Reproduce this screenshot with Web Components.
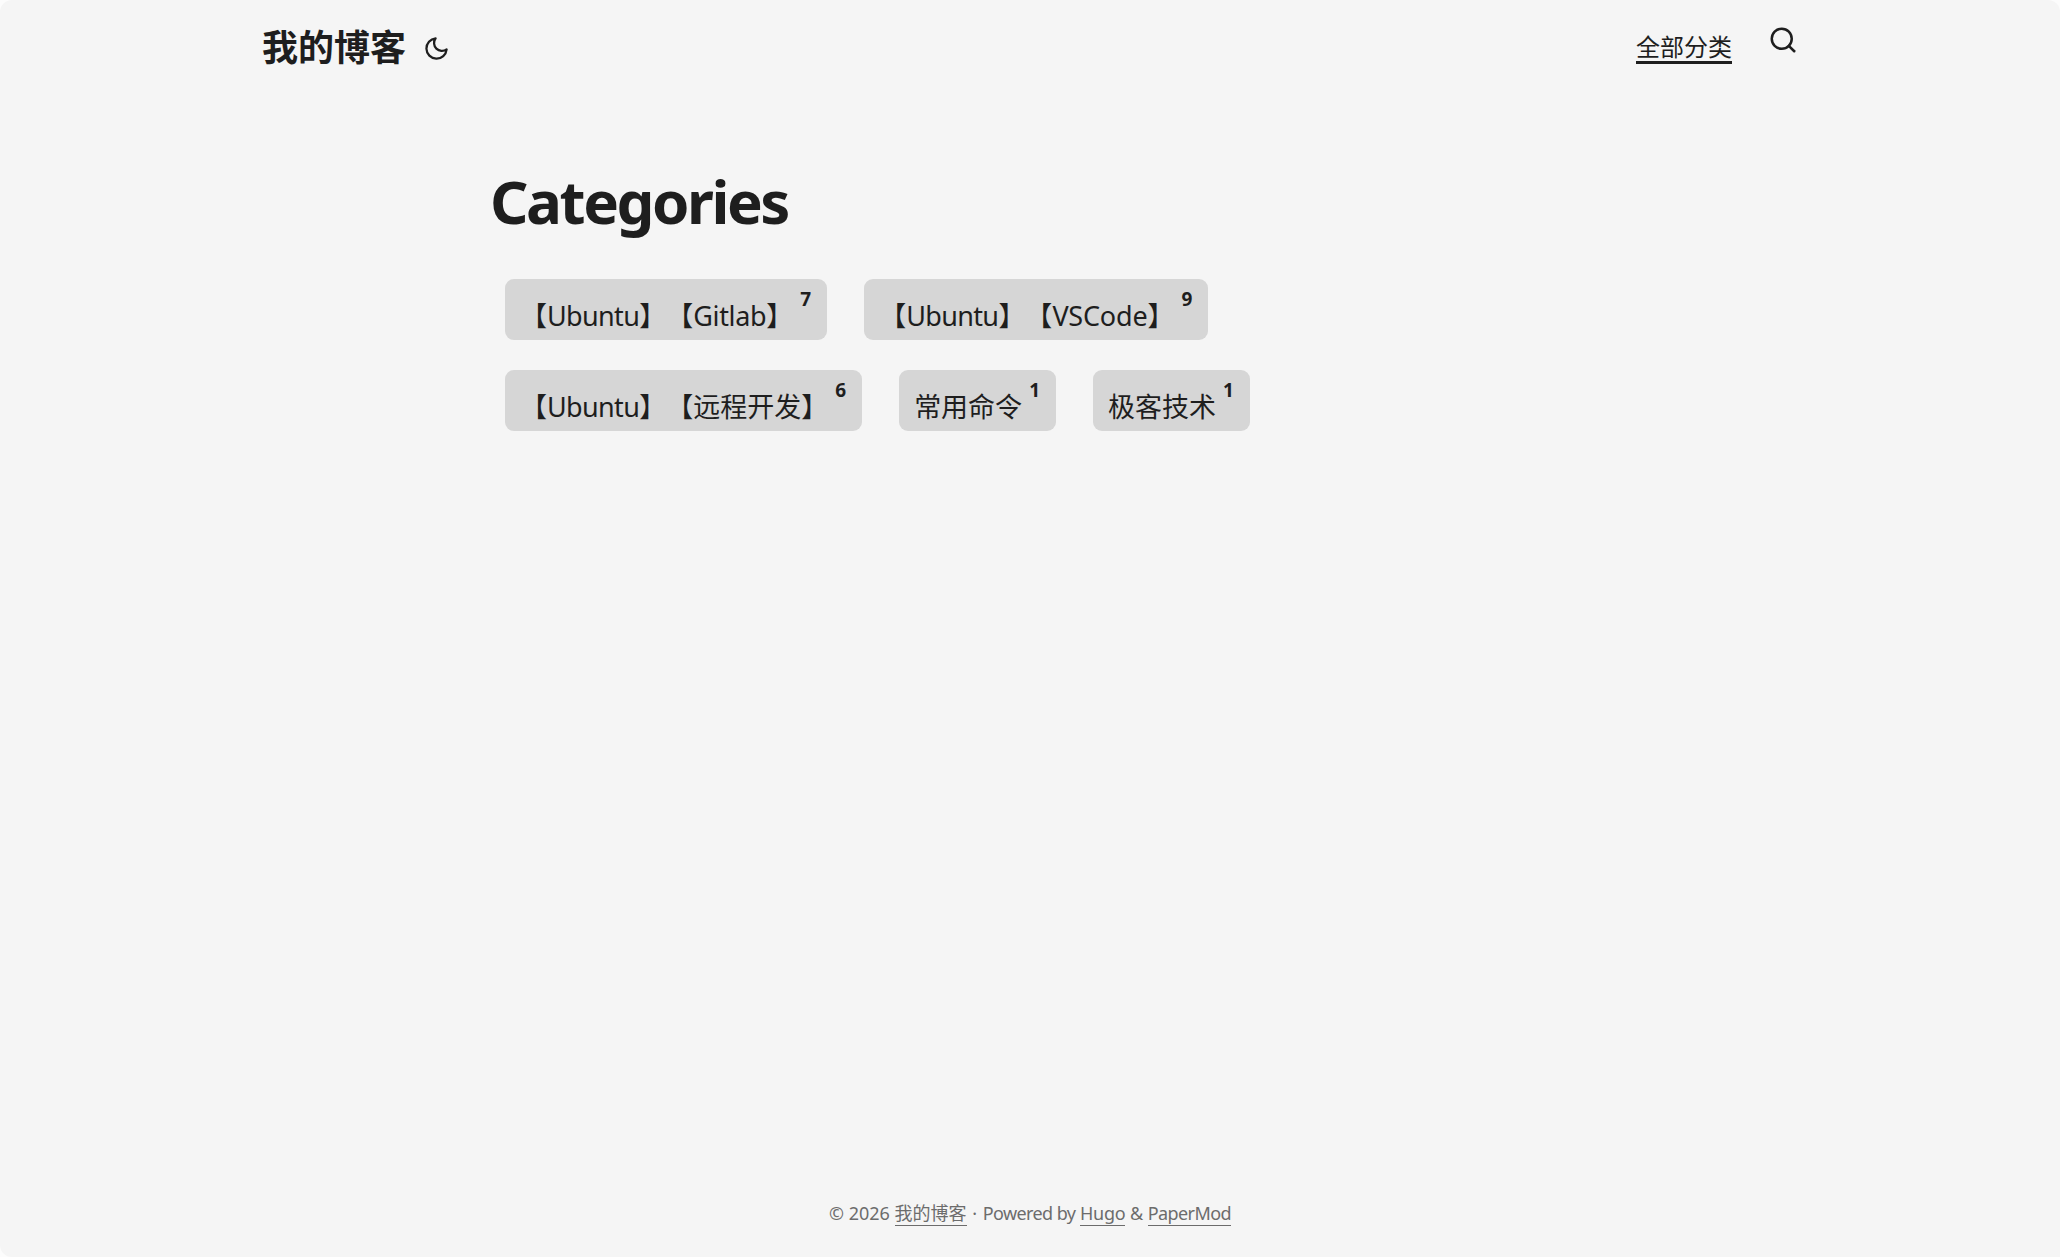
<!doctype html>
<html><head><meta charset="utf-8"><title>Categories</title>
<style>
html,body{margin:0;padding:0;height:100%}
html{background:#fcfcfc}
body{color:#1e1e1e;font-family:"Noto Sans","Noto Sans CJK SC",sans-serif;font-size:27px;line-height:1.6}
.u{letter-spacing:-.65px}.g{letter-spacing:-.35px}.v{letter-spacing:-.2px}
</style></head><body>
<blog-page>
  <blog-header slot="header"></blog-header>
  <blog-main title-text="Categories">
    <term-tag count="7">【<span class="u">Ubuntu</span>】【<span class="g">Gitlab</span>】</term-tag>
    <term-tag count="9">【<span class="u">Ubuntu</span>】【<span class="v">VSCode</span>】</term-tag>
    <term-tag count="6">【<span class="u">Ubuntu</span>】【远程开发】</term-tag>
    <term-tag count="1">常用命令</term-tag>
    <term-tag count="1">极客技术</term-tag>
  </blog-main>
  <blog-footer slot="footer"></blog-footer>
</blog-page>
<script>
const def=(name,html,init)=>customElements.define(name,class extends HTMLElement{
  constructor(){super();this.attachShadow({mode:"open"}).innerHTML=html;}
  connectedCallback(){init&&init(this)}
});
def("blog-page",`<style>
:host{display:flex;flex-direction:column;height:1257px;overflow:hidden;background:#f5f5f5;border-radius:12px 12px 0 12px}
.m{flex:1}
</style><slot name="header"></slot><div class="m"><slot></slot></div><slot name="footer"></slot>`);
def("blog-header",`<style>
:host{display:block}
nav{box-sizing:border-box;width:1536px;margin:0 auto;display:flex;justify-content:space-between;height:96px}
.l{display:flex;align-items:center;height:96px}
.logo{font-size:36px;font-weight:700;font-family:"Noto Sans CJK SC","Noto Sans",sans-serif;line-height:90px;height:96px;color:#1e1e1e}
.moon{display:block;margin-left:17px}
.r{display:flex;align-items:flex-start}
a{font-size:24px;font-family:"Noto Sans CJK SC",sans-serif;font-weight:400;color:#1e1e1e;text-decoration:none;display:block;line-height:34px;margin-top:29px;height:35px;border-bottom:3px solid #1e1e1e;box-sizing:border-box}
.s{display:block;margin-left:36px;margin-top:25px}
</style><nav><div class="l"><span class="logo">我的博客</span>
<svg class="moon" width="27" height="27" viewBox="0 0 24 24" fill="none" stroke="#1e1e1e" stroke-width="2" stroke-linecap="round" stroke-linejoin="round"><path d="M21 12.79A9 9 0 1 1 11.21 3 7 7 0 0 0 21 12.79z"/></svg>
</div><div class="r"><a href="#">全部分类</a>
<svg class="s" width="30" height="30" viewBox="0 0 24 24" fill="none" stroke="#1e1e1e" stroke-width="2" stroke-linecap="round" stroke-linejoin="round"><circle cx="11" cy="11" r="8"/><line x1="21" y1="21" x2="16.65" y2="16.65"/></svg>
</div></nav>`);
def("blog-main",`<style>
:host{display:block;box-sizing:border-box;width:1152px;margin:0 auto;padding:0 36px}
h1{margin:63px 0 0;font-size:60px;line-height:84px;font-weight:700;color:#1e1e1e;letter-spacing:-2.45px}
.tags{margin-top:36px;padding-left:15px;display:flex;flex-wrap:wrap;column-gap:37px;row-gap:30px}
</style><h1></h1><div class="tags"><slot></slot></div>`,el=>{el.shadowRoot.querySelector("h1").textContent=el.getAttribute("title-text")});
def("term-tag",`<style>
:host{display:block}
a{display:flex;align-items:flex-start;height:61px;box-sizing:border-box;background:#d6d6d6;border-radius:9px;padding:0 16px 0 15px;color:#1e1e1e;font-size:27px;line-height:73px;text-decoration:none;white-space:nowrap;text-spacing-trim:space-all}
sup{font-size:19px;font-weight:700;line-height:24px;margin:8px 0 0 7px;color:#1e1e1e}
</style><a href="#"><span><slot></slot></span><sup></sup></a>`,el=>{el.shadowRoot.querySelector("sup").textContent=el.getAttribute("count")});
def("blog-footer",`<style>
:host{display:block;text-align:center;color:#6c6c6c;font-size:18px;line-height:29px;height:58px}
a{color:inherit;text-decoration:none;border-bottom:1.5px solid #6c6c6c}
.p{letter-spacing:-.6px}.h{letter-spacing:-.3px}.m{letter-spacing:-.6px}.d{word-spacing:1px}
</style>© 2026 <a href="#">我的博客</a><span class="d"> · </span><span class="p">Powered by</span> <a class="h" href="#">Hugo</a> &amp; <a class="m" href="#">PaperMod</a>`);
</script></body></html>
